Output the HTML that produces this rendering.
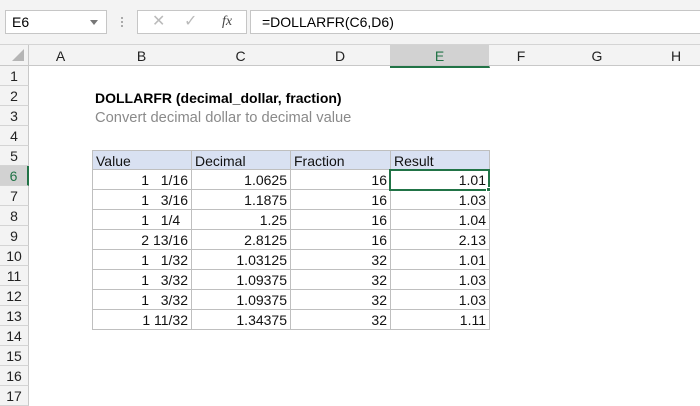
<!DOCTYPE html><html><head><style>
body{margin:0;width:700px;height:400px;overflow:hidden;background:#fff;font-family:"Liberation Sans",sans-serif;position:relative}
.a{position:absolute;box-sizing:border-box}
.ch{position:absolute;top:45px;height:21px;font-size:14px;text-align:center;line-height:22px;color:#222;border-right:1px solid #c8c8c8;background:#f3f3f3}
.rh{position:absolute;left:0;width:29px;height:20px;font-size:14px;text-align:center;line-height:20px;color:#222;background:#f3f3f3;border-bottom:1px solid #d4d4d4;border-right:1px solid #c8c8c8;box-sizing:border-box}
.c{position:absolute;height:20px;font-size:14px;line-height:20px;padding:0 3px;box-sizing:border-box;border:1px solid #bfbfbf;margin:0 -1px -1px 0;white-space:pre;color:#111}
.r{text-align:right}
</style></head><body>
<div class="a" style="left:0;top:0;width:700px;height:45px;background:#f3f3f3;border-bottom:1px solid #d4d4d4"></div>
<div class="a" style="left:5px;top:10px;width:102px;height:24px;background:#fff;border:1px solid #c6c6c6;font-size:14px;line-height:22px;padding-left:6px">E6<span style="position:absolute;right:8px;top:9px;border:4px solid transparent;border-top:5px solid #777"></span></div>
<div class="a" style="left:121px;top:17px;width:2px;height:10px;border-left:2px dotted #aaa"></div>
<div class="a" style="left:137px;top:10px;width:110px;height:24px;background:#fff;border:1px solid #c6c6c6;color:#bbb;font-size:16px;line-height:22px"><span style="position:absolute;left:14px">✕</span><span style="position:absolute;left:46px">✓</span><span style="position:absolute;left:84px;color:#444;font-family:'Liberation Serif';font-style:italic;font-size:14px">fx</span></div>
<div class="a" style="left:250px;top:10px;width:460px;height:24px;background:#fff;border:1px solid #c6c6c6;font-size:14px;line-height:22px;padding-left:11px">=DOLLARFR(C6,D6)</div>
<div class="a" style="left:0;top:45px;width:29px;height:21px;background:#f3f3f3;border-right:1px solid #c8c8c8;border-bottom:1px solid #c8c8c8"><span style="position:absolute;right:4px;bottom:4px;border-left:12px solid transparent;border-bottom:12px solid #b5b5b5"></span></div>
<div class="ch" style="left:29px;width:63px">A</div>
<div class="ch" style="left:92px;width:99px">B</div>
<div class="ch" style="left:191px;width:99px">C</div>
<div class="ch" style="left:290px;width:100px">D</div>
<div class="ch" style="left:390px;width:99px;background:#d2d2d2;border-bottom:2px solid #217346;color:#217346">E</div>
<div class="ch" style="left:489px;width:64px">F</div>
<div class="ch" style="left:553px;width:88px">G</div>
<div class="ch" style="left:641px;width:70px">H</div>
<div class="a" style="left:29px;top:65px;width:671px;height:1px;background:#c8c8c8"></div>
<div class="rh" style="top:66px">1</div><div class="rh" style="top:86px">2</div><div class="rh" style="top:106px">3</div><div class="rh" style="top:126px">4</div><div class="rh" style="top:146px">5</div><div class="rh" style="top:166px;background:#d2d2d2;color:#217346;border-right:2px solid #217346">6</div><div class="rh" style="top:186px">7</div><div class="rh" style="top:206px">8</div><div class="rh" style="top:226px">9</div><div class="rh" style="top:246px">10</div><div class="rh" style="top:266px">11</div><div class="rh" style="top:286px">12</div><div class="rh" style="top:306px">13</div><div class="rh" style="top:326px">14</div><div class="rh" style="top:346px">15</div><div class="rh" style="top:366px">16</div><div class="rh" style="top:386px">17</div>
<div class="a" style="left:95px;top:88px;font-size:14px;font-weight:bold;line-height:20px">DOLLARFR (decimal_dollar, fraction)</div>
<div class="a" style="left:95px;top:108px;font-size:14.7px;color:#8a8a8a;line-height:20px">Convert decimal dollar to decimal value</div>
<div style="position:absolute;left:0;top:0">
<div class="c" style="left:92px;top:150px;width:100px;background:#d9e1f2">Value</div>
<div class="c" style="left:191px;top:150px;width:100px;background:#d9e1f2">Decimal</div>
<div class="c" style="left:290px;top:150px;width:101px;background:#d9e1f2">Fraction</div>
<div class="c" style="left:390px;top:150px;width:100px;background:#d9e1f2">Result</div>
</div>
<div id="t"></div>
<script>
var d=[["1   1/16","1.0625","16","1.01"],["1   3/16","1.1875","16","1.03"],["1   1/4  ","1.25","16","1.04"],["2 13/16","2.8125","16","2.13"],["1   1/32","1.03125","32","1.01"],["1   3/32","1.09375","32","1.03"],["1   3/32","1.09375","32","1.03"],["1 11/32","1.34375","32","1.11"]];
var L=[92,191,290,390],W=[100,100,101,100],h="";
d.forEach(function(r,i){r.forEach(function(v,j){h+='<div class="c r" style="left:'+L[j]+'px;top:'+(169+i*20)+'px;width:'+W[j]+'px;height:21px">'+v+'</div>';});});
document.getElementById("t").innerHTML=h;
</script>
<div class="a" style="left:389px;top:169px;width:101px;height:22px;border:2px solid #217346"></div>
<div class="a" style="left:486px;top:187px;width:5px;height:5px;background:#217346;border:1px solid #fff"></div>
</body></html>
